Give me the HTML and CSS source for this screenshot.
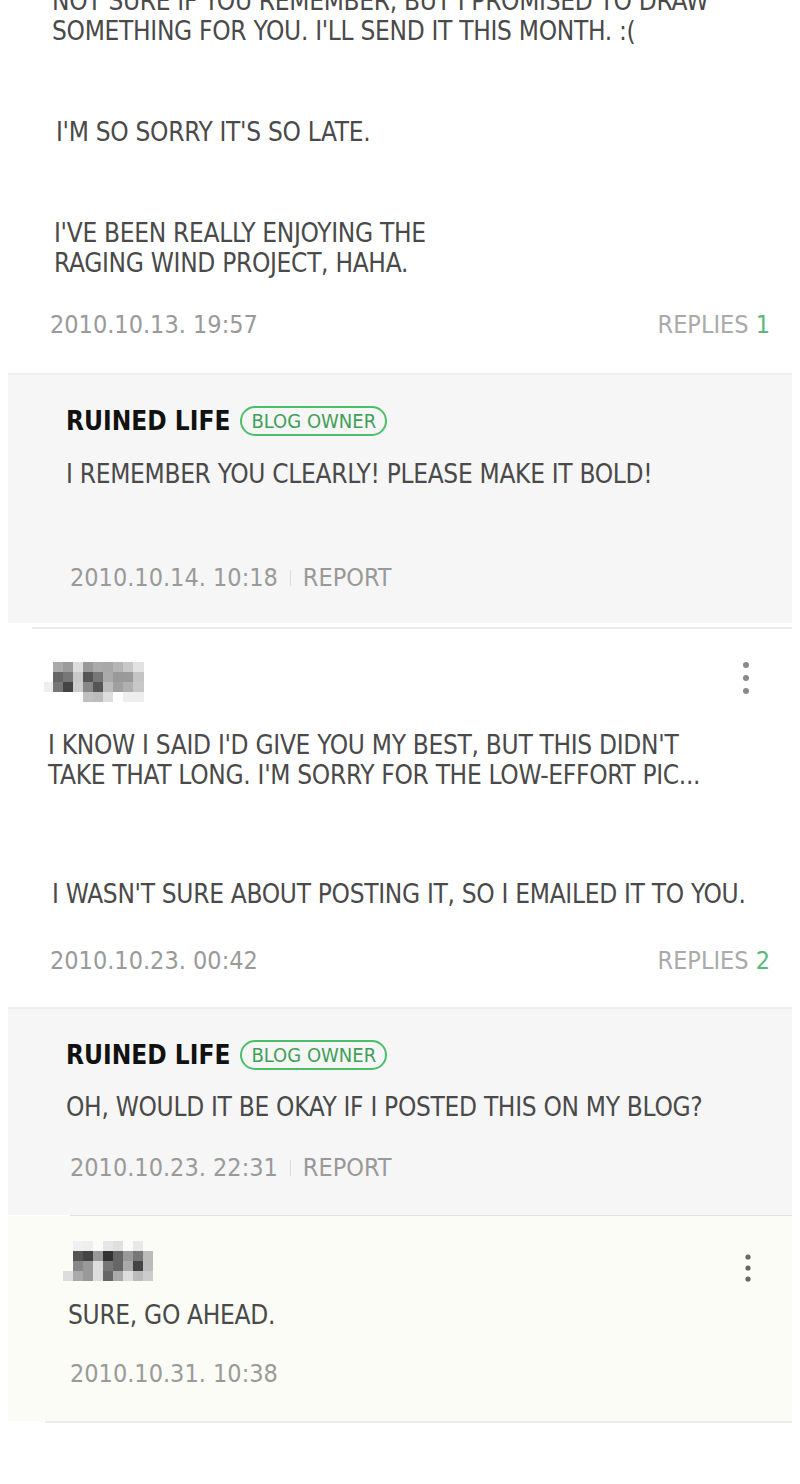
FILE: index.html
```html
<!DOCTYPE html>
<html lang="en">
<head>
    <meta charset="UTF-8">
    <meta name="viewport" content="width=device-width, initial-scale=1.0">
    <title>Comments</title>
    <link rel="stylesheet" href="styles.css">
</head>
<body>

    <div class="comments">

        <!-- first comment, scrolled partly out of view -->
        <div class="comment comment-first">
            <div class="comment-text">
                <p>NOT SURE IF YOU REMEMBER, BUT I PROMISED TO DRAW<br>SOMETHING FOR YOU. I'LL SEND IT THIS MONTH. :(</p>
                <p class="shift-4">I'M SO SORRY IT'S SO LATE.</p>
                <p class="shift-2">I'VE BEEN REALLY ENJOYING THE<br>RAGING WIND PROJECT, HAHA.</p>
            </div>
            <div class="comment-meta">
                <span class="date">2010.10.13. 19:57</span>
                <span class="replies">REPLIES <em>1</em></span>
            </div>
        </div>

        <div class="reply reply-first">
            <div class="author">
                <span class="name">RUINED LIFE</span>
                <span class="badge">BLOG OWNER</span>
            </div>
            <p class="reply-text">I REMEMBER YOU CLEARLY! PLEASE MAKE IT BOLD!</p>
            <div class="reply-meta">
                <span class="date">2010.10.14. 10:18</span>
                <span class="sep"></span>
                <span class="report">REPORT</span>
            </div>
        </div>

        <div class="divider divider-wide"></div>

        <div class="comment comment-second">
            <div class="comment-head">
                <svg class="avatar" width="110" height="42" viewBox="0 0 110 42" shape-rendering="crispEdges">
                    <rect x="0" y="20" width="9" height="10" fill="#eee"/>
                    <rect x="9" y="0" width="10" height="10" fill="#aaa"/>
                    <rect x="19" y="0" width="10" height="10" fill="#9c9c9c"/>
                    <rect x="29" y="0" width="10" height="10" fill="#ddd"/>
                    <rect x="39" y="0" width="10" height="10" fill="#999"/>
                    <rect x="49" y="0" width="10" height="10" fill="#aaa"/>
                    <rect x="59" y="0" width="10" height="10" fill="#a8a8a8"/>
                    <rect x="69" y="0" width="10" height="10" fill="#b5b5b5"/>
                    <rect x="79" y="0" width="10" height="10" fill="#c8c8c8"/>
                    <rect x="89" y="0" width="11" height="10" fill="#e2e2e2"/>
                    <rect x="9" y="10" width="10" height="10" fill="#666"/>
                    <rect x="19" y="10" width="10" height="10" fill="#777"/>
                    <rect x="29" y="10" width="10" height="10" fill="#c8c8c8"/>
                    <rect x="39" y="10" width="10" height="10" fill="#555"/>
                    <rect x="49" y="10" width="10" height="10" fill="#777"/>
                    <rect x="59" y="10" width="10" height="10" fill="#aaa"/>
                    <rect x="69" y="10" width="10" height="10" fill="#999"/>
                    <rect x="79" y="10" width="10" height="10" fill="#9a9a9a"/>
                    <rect x="89" y="10" width="11" height="10" fill="#c4c4c4"/>
                    <rect x="9" y="20" width="10" height="10" fill="#777"/>
                    <rect x="19" y="20" width="10" height="10" fill="#444"/>
                    <rect x="29" y="20" width="10" height="10" fill="#ccc"/>
                    <rect x="39" y="20" width="10" height="10" fill="#888"/>
                    <rect x="49" y="20" width="10" height="10" fill="#555"/>
                    <rect x="59" y="20" width="10" height="10" fill="#bbb"/>
                    <rect x="69" y="20" width="10" height="10" fill="#a0a0a0"/>
                    <rect x="79" y="20" width="10" height="10" fill="#b0b0b0"/>
                    <rect x="89" y="20" width="11" height="10" fill="#c8c8c8"/>
                    <rect x="39" y="30" width="10" height="10" fill="#c0c0c0"/>
                    <rect x="49" y="30" width="10" height="10" fill="#bbb"/>
                    <rect x="59" y="30" width="10" height="10" fill="#ddd"/>
                    <rect x="79" y="30" width="10" height="10" fill="#eee"/>
                    <rect x="89" y="30" width="11" height="10" fill="#eee"/>
                </svg>
                <svg class="more" width="8" height="34" viewBox="0 0 8 34">
                    <circle cx="4" cy="4" r="3" fill="#8a8a8a"/>
                    <circle cx="4" cy="17" r="3" fill="#8a8a8a"/>
                    <circle cx="4" cy="30" r="3" fill="#8a8a8a"/>
                </svg>
            </div>
            <div class="comment-text">
                <p>I KNOW I SAID I'D GIVE YOU MY BEST, BUT THIS DIDN'T<br>TAKE THAT LONG. I'M SORRY FOR THE LOW-EFFORT PIC...</p>
                <p class="shift-4">I WASN'T SURE ABOUT POSTING IT, SO I EMAILED IT TO YOU.</p>
            </div>
            <div class="comment-meta">
                <span class="date">2010.10.23. 00:42</span>
                <span class="replies">REPLIES <em>2</em></span>
            </div>
        </div>

        <div class="reply reply-second">
            <div class="author">
                <span class="name">RUINED LIFE</span>
                <span class="badge">BLOG OWNER</span>
            </div>
            <p class="reply-text">OH, WOULD IT BE OKAY IF I POSTED THIS ON MY BLOG?</p>
            <div class="reply-meta">
                <span class="date">2010.10.23. 22:31</span>
                <span class="sep"></span>
                <span class="report">REPORT</span>
            </div>
        </div>

        <div class="divider divider-inner"></div>

        <div class="reply reply-mine">
            <div class="comment-head">
                <svg class="avatar" width="100" height="42" viewBox="0 0 100 42" shape-rendering="crispEdges">
                    <rect x="10" y="0" width="10" height="10" fill="#f0f0f0"/>
                    <rect x="20" y="0" width="10" height="10" fill="#eee"/>
                    <rect x="40" y="0" width="10" height="10" fill="#e6e6e6"/>
                    <rect x="50" y="0" width="10" height="10" fill="#e0e0e0"/>
                    <rect x="70" y="0" width="10" height="10" fill="#e8e8e8"/>
                    <rect x="10" y="10" width="10" height="10" fill="#555"/>
                    <rect x="20" y="10" width="10" height="10" fill="#444"/>
                    <rect x="30" y="10" width="10" height="10" fill="#999"/>
                    <rect x="40" y="10" width="10" height="10" fill="#333"/>
                    <rect x="50" y="10" width="10" height="10" fill="#666"/>
                    <rect x="60" y="10" width="10" height="10" fill="#999"/>
                    <rect x="70" y="10" width="10" height="10" fill="#777"/>
                    <rect x="80" y="10" width="10" height="10" fill="#bbb"/>
                    <rect x="10" y="20" width="10" height="10" fill="#888"/>
                    <rect x="20" y="20" width="10" height="10" fill="#999"/>
                    <rect x="30" y="20" width="10" height="10" fill="#ddd"/>
                    <rect x="40" y="20" width="10" height="10" fill="#777"/>
                    <rect x="50" y="20" width="10" height="10" fill="#666"/>
                    <rect x="60" y="20" width="10" height="10" fill="#aaa"/>
                    <rect x="70" y="20" width="10" height="10" fill="#444"/>
                    <rect x="80" y="20" width="10" height="10" fill="#bbb"/>
                    <rect x="0" y="30" width="10" height="10" fill="#ddd"/>
                    <rect x="10" y="30" width="10" height="10" fill="#aaa"/>
                    <rect x="20" y="30" width="10" height="10" fill="#999"/>
                    <rect x="30" y="30" width="10" height="10" fill="#ddd"/>
                    <rect x="40" y="30" width="10" height="10" fill="#666"/>
                    <rect x="50" y="30" width="10" height="10" fill="#aaa"/>
                    <rect x="60" y="30" width="10" height="10" fill="#ddd"/>
                    <rect x="70" y="30" width="10" height="10" fill="#bbb"/>
                    <rect x="80" y="30" width="10" height="10" fill="#ccc"/>
                </svg>
                <svg class="more" width="8" height="28" viewBox="0 0 8 28">
                    <circle cx="4" cy="3" r="2.6" fill="#666"/>
                    <circle cx="4" cy="14" r="2.6" fill="#666"/>
                    <circle cx="4" cy="25" r="2.6" fill="#666"/>
                </svg>
            </div>
            <p class="reply-text">SURE, GO AHEAD.</p>
            <div class="reply-meta">
                <span class="date">2010.10.31. 10:38</span>
            </div>
        </div>

        <div class="divider divider-bottom"></div>

    </div>

</body>
</html>
```

FILE: styles.css
```css
body {
    font-family: 'Liberation Sans Narrow', 'DejaVu Sans Condensed', 'Liberation Sans', sans-serif;
    background-color: #fff;
    color: #4a4a4a;
    margin: 0;
    padding: 0;
    overflow: hidden;
}
p {
    margin: 0;
}
.comments {
    margin-top: -14px;
}
.comment {
    padding: 0 30px 0 52px;
}
.comment-text p {
    font-size: 26px;
    line-height: 30px;
    letter-spacing: -0.3px;
    margin-bottom: 71px;
}
.comment-text p:last-child {
    margin-bottom: 0;
}
.shift-4 {
    padding-left: 4px;
}
.shift-2 {
    padding-left: 2px;
}
.comment-meta {
    display: flex;
    justify-content: space-between;
    align-items: center;
    margin-top: 32px;
    padding-bottom: 33px;
    margin-left: -2px;
    font-size: 25px;
    line-height: 30px;
}
.date {
    color: #9a9a9a;
}
.replies {
    color: #aaa;
}
.replies em {
    font-style: normal;
    color: #5cb87a;
}

/* reply blocks */
.reply {
    margin: 0 8px;
    padding: 0 30px 0 58px;
    background-color: #f6f6f6;
    border-top: 2px solid #eee;
}
.reply-first {
    padding-top: 30px;
    height: 218px;
}
.reply-second {
    padding-top: 30px;
    height: 176px;
}
.author {
    display: flex;
    align-items: center;
    gap: 10px;
    height: 32px;
}
.name {
    font-size: 26px;
    font-weight: bold;
    color: #111;
}
.badge {
    display: inline-block;
    height: 26px;
    line-height: 26px;
    padding: 0 9px;
    border: 2px solid #4cbf6a;
    border-radius: 15px;
    color: #3f9f58;
    font-size: 20px;
}
.reply-text {
    font-size: 26px;
    line-height: 30px;
    letter-spacing: -0.3px;
    margin-top: 21px;
}
.reply-first .reply-text {
    margin-top: 22px;
}
.reply-meta {
    display: flex;
    align-items: center;
    gap: 12px;
    font-size: 25px;
    line-height: 30px;
    margin-top: 74px;
    padding-left: 4px;
}
.reply-second .reply-meta {
    margin-top: 31px;
}
.sep {
    width: 1px;
    height: 16px;
    background-color: #ddd;
}
.report {
    color: #999;
}

/* thin rules between items */
.divider {
    height: 2px;
    background-color: #ebebeb;
}
.divider-wide {
    margin: 4px 8px 0 32px;
}
.divider-inner {
    margin: 0 8px 0 70px;
    height: 1px;
    background-color: #e2e2e2;
}
.divider-bottom {
    margin: 0 8px 0 45px;
}

/* author row with pixelated avatar and menu dots */
.comment-head {
    display: flex;
    justify-content: space-between;
    align-items: flex-start;
}
.avatar {
    filter: blur(0.7px);
}
.comment-second {
    padding-left: 44px;
}
.comment-second .comment-head {
    padding-top: 33px;
    padding-right: 20px;
}
.comment-second .more {
    margin-top: -1px;
}
.comment-second .comment-text {
    margin-top: 26px;
    padding-left: 4px;
}
.comment-second .comment-text p {
    margin-bottom: 89px;
}
.comment-second .comment-text p:last-child {
    margin-bottom: 0;
}
.comment-second .comment-meta {
    margin-top: 37px;
    padding-bottom: 31px;
    margin-left: 6px;
}

.reply-mine {
    border-top: none;
    background-color: #fbfcf5;
    height: 205px;
    padding-left: 55px;
    padding-right: 10px;
    padding-top: 0;
}
.reply-mine .comment-head {
    padding-top: 25px;
    padding-right: 30px;
}
.reply-mine .more {
    margin-top: 13px;
}
.reply-mine .reply-text {
    margin-top: 17px;
    padding-left: 5px;
}
.reply-mine .reply-meta {
    margin-top: 29px;
    padding-left: 7px;
}
```
